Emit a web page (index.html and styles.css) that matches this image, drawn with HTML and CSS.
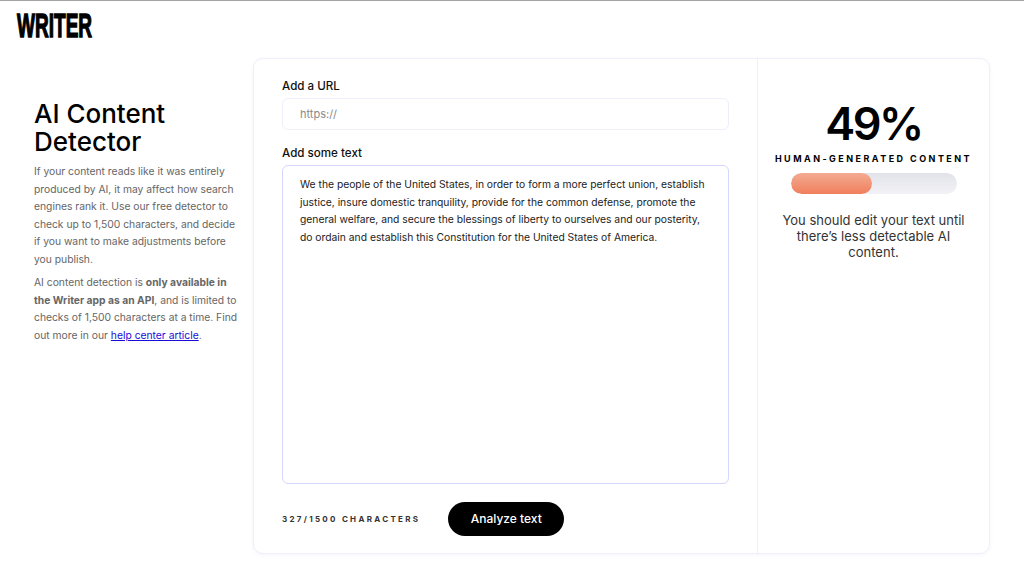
FILE: index.html
```html
<!DOCTYPE html>
<html lang="en">
<head>
    <meta charset="UTF-8">
    <meta name="viewport" content="width=device-width, initial-scale=1.0">
    <title>AI Content Detector</title>
    <link rel="stylesheet" href="styles.css">
</head>
<body>
    <!-- Logo bar -->
    <div class="topbar">
        <a href="#" class="logo">WRITER</a>
    </div>

    <div class="page">
        <!-- Intro column -->
        <div class="intro">
            <h1>AI Content<br>Detector</h1>
            <p>If your content reads like it was entirely<br>produced by AI, it may affect how search<br>engines rank it. Use our free detector to<br>check up to 1,500 characters, and decide<br>if you want to make adjustments before<br>you publish.</p>
            <p>AI content detection is <strong>only available in<br>the Writer app as an API</strong>, and is limited to<br>checks of 1,500 characters at a time. Find<br>out more in our <a href="#">help center article</a>.</p>
        </div>

        <!-- Detector card -->
        <div class="card">
            <div class="form">
                <div class="label">Add a URL</div>
                <div class="url-box">https://</div>
                <div class="label">Add some text</div>
                <div class="text-box">We the people of the United States, in order to form a more perfect union, establish<br>justice, insure domestic tranquility, provide for the common defense, promote the<br>general welfare, and secure the blessings of liberty to ourselves and our posterity,<br>do ordain and establish this Constitution for the United States of America.</div>
                <div class="form-footer">
                    <span class="count">327/1500 CHARACTERS</span>
                    <a href="#" class="button">Analyze text</a>
                </div>
            </div>
            <div class="result">
                <div class="score">49%</div>
                <div class="score-label">HUMAN-GENERATED CONTENT</div>
                <div class="bar"><div class="bar-fill"></div></div>
                <div class="advice">You should edit your text until<br>there’s less detectable AI<br>content.</div>
            </div>
        </div>
    </div>
</body>
</html>
```

FILE: styles.css
```css
* {
    box-sizing: border-box;
}
body {
    margin: 0;
    height: 570px;
    overflow: hidden;
    background-color: #fff;
    border-top: 1px solid #a3a3a3;
    font-family: Inter, "Noto Sans", sans-serif;
    color: #000;
}
.topbar {
    height: 57px;
    padding: 9px 0 0 17px;
}
.logo {
    display: inline-block;
    color: #000;
    text-decoration: none;
    font-family: "Liberation Sans", sans-serif;
    font-weight: bold;
    font-size: 34px;
    line-height: 30px;
    -webkit-text-stroke: 1.4px #000;
    transform: scaleX(0.56);
    transform-origin: left center;
}
.page {
    display: flex;
    align-items: flex-start;
}
.intro {
    width: 253px;
    padding: 42px 0 0 34px;
}
.intro h1 {
    margin: 0 0 7px;
    font-size: 26px;
    font-weight: 500;
    line-height: 28px;
}
.intro p {
    margin: 0 0 6px;
    font-size: 10.3px;
    line-height: 17.5px;
    color: #666;
}
.intro a {
    color: #1a0dd8;
}
.card {
    display: flex;
    width: 737px;
    height: 496px;
    background-color: #fff;
    border: 1px solid #eeeffa;
    border-radius: 10px;
    box-shadow: 0 1px 4px rgba(90, 90, 200, 0.06);
}
.form {
    width: 504px;
    padding: 18px 28px 0 28px;
    border-right: 1px solid #eeeffa;
}
.label {
    font-size: 11.6px;
    font-weight: 500;
    line-height: 18px;
    color: #111;
}
.url-box {
    height: 32px;
    margin: 3px 0 14px;
    padding-left: 17px;
    border: 1px solid #eeeffa;
    border-radius: 6px;
    font-size: 11px;
    line-height: 30px;
    color: #8a8a8a;
}
.text-box {
    height: 319px;
    margin-top: 3px;
    padding: 10px 17px;
    border: 1px solid #d5d6fb;
    border-radius: 6px;
    font-size: 10.3px;
    line-height: 17.5px;
    color: #222;
}
.form-footer {
    display: flex;
    align-items: center;
    gap: 28px;
    margin-top: 18px;
}
.count {
    font-size: 8px;
    font-weight: 700;
    letter-spacing: 2.3px;
    color: #333;
}
.button {
    display: inline-block;
    width: 116px;
    height: 34px;
    border-radius: 17px;
    background-color: #000;
    color: #fff;
    font-size: 12px;
    font-weight: 500;
    line-height: 34px;
    text-align: center;
    text-decoration: none;
}
.result {
    flex: 1;
    padding-top: 36px;
    text-align: center;
}
.score {
    font-size: 45px;
    font-weight: 600;
    letter-spacing: -2.5px;
    line-height: 57px;
}
.score-label {
    font-size: 9px;
    font-weight: 700;
    letter-spacing: 2.45px;
    line-height: 14px;
}
.bar {
    width: 166px;
    height: 21px;
    margin: 7px auto 0;
    border-radius: 11px;
    background: linear-gradient(#e2e3e9, #f2f2f6);
    overflow: hidden;
}
.bar-fill {
    width: 49%;
    height: 100%;
    border-radius: 11px;
    background: linear-gradient(#f3ab91, #f07f5c);
}
.advice {
    margin-top: 18px;
    font-size: 13px;
    line-height: 16px;
    color: #333;
}
```
